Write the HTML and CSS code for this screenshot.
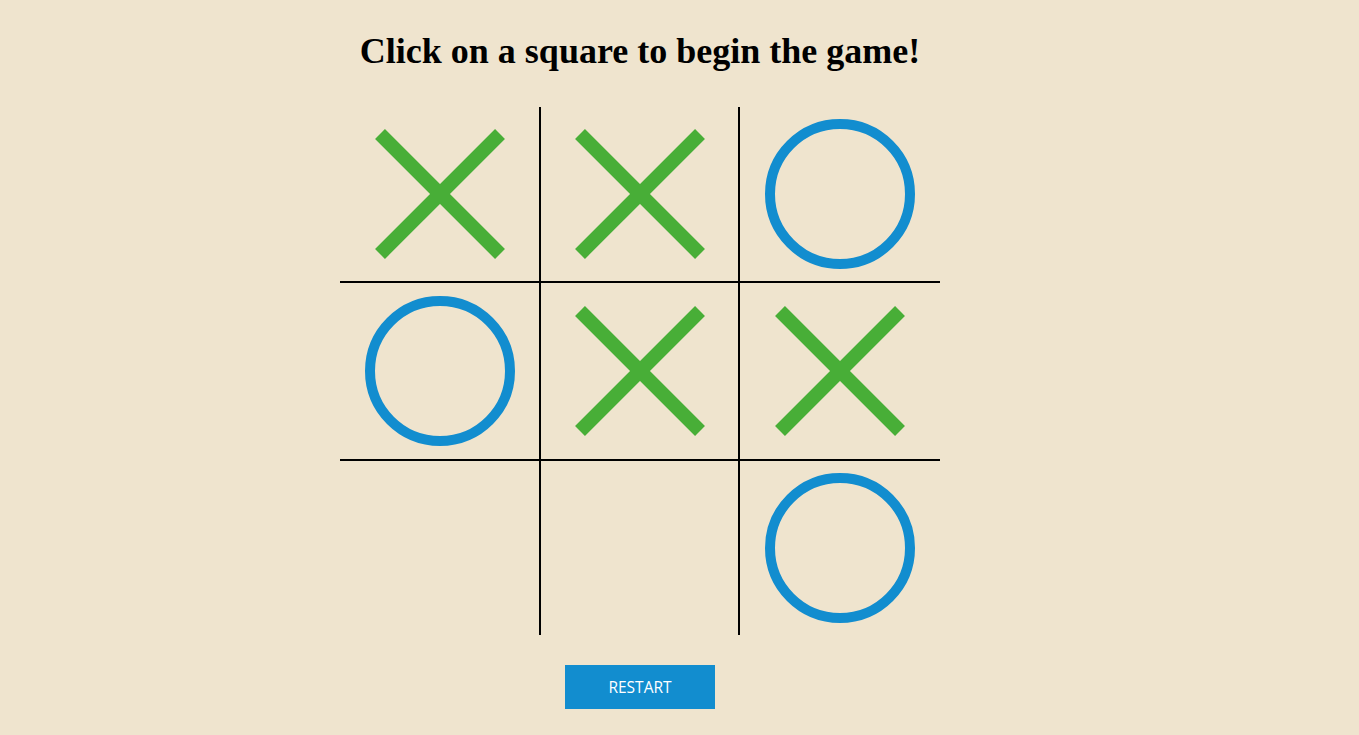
FILE: index.html
```html
<!DOCTYPE html>
<html lang="en">
<head>
<meta charset="utf-8">
<title>Tic Tac Toe</title>
<link rel="stylesheet" href="styles.css">
</head>
<body>
<div class="game">
  <h1 class="status">Click on a square to begin the game!</h1>
  <div class="board">
    <div class="cell c1 r1"><svg class="mark" width="132" height="132" viewBox="0 0 132 132"><line x1="6" y1="6" x2="126" y2="126"/><line x1="126" y1="6" x2="6" y2="126"/></svg></div>
    <div class="cell c2 r1"><svg class="mark" width="132" height="132" viewBox="0 0 132 132"><line x1="6" y1="6" x2="126" y2="126"/><line x1="126" y1="6" x2="6" y2="126"/></svg></div>
    <div class="cell c3 r1"><svg class="ring" width="150" height="150" viewBox="0 0 150 150"><circle cx="75" cy="75" r="70"/></svg></div>
    <div class="cell c1 r2"><svg class="ring" width="150" height="150" viewBox="0 0 150 150"><circle cx="75" cy="75" r="70"/></svg></div>
    <div class="cell c2 r2"><svg class="mark" width="132" height="132" viewBox="0 0 132 132"><line x1="6" y1="6" x2="126" y2="126"/><line x1="126" y1="6" x2="6" y2="126"/></svg></div>
    <div class="cell c3 r2"><svg class="mark" width="132" height="132" viewBox="0 0 132 132"><line x1="6" y1="6" x2="126" y2="126"/><line x1="126" y1="6" x2="6" y2="126"/></svg></div>
    <div class="cell c1 r3"></div>
    <div class="cell c2 r3"></div>
    <div class="cell c3 r3"><svg class="ring" width="150" height="150" viewBox="0 0 150 150"><circle cx="75" cy="75" r="70"/></svg></div>
  </div>
  <div class="actions">
    <button class="restart" type="button">RESTART</button>
  </div>
</div>
</body>
</html>
```

FILE: styles.css
```css
html, body {
  margin: 0;
  padding: 0;
  background: #efe4ce;
}

body {
  height: 735px;
  overflow: hidden;
}

.game {
  width: 600px;
  margin-left: 340px;
  padding-top: 30px;
}

.status {
  margin: 0 0 35px;
  font-family: "Liberation Serif", "Times New Roman", serif;
  font-weight: bold;
  font-size: 36px;
  line-height: 42px;
  text-align: center;
  color: #000;
}

.board {
  display: grid;
  grid-template-columns: 201px 199px 200px;
  grid-template-rows: 176px 178px 174px;
}

.cell {
  display: flex;
  align-items: center;
  justify-content: center;
  box-sizing: border-box;
}

.c1, .c2 {
  border-right: 2px solid #000;
}

.r1, .r2 {
  border-bottom: 2px solid #000;
}

.mark line {
  stroke: #48ae37;
  stroke-width: 14;
  stroke-linecap: butt;
}

.ring circle {
  fill: none;
  stroke: #128dcf;
  stroke-width: 10;
}

.actions {
  display: flex;
  justify-content: center;
  padding-top: 30px;
}

.restart {
  width: 150px;
  height: 44px;
  border: none;
  background: #128dcf;
  color: #fff;
  font-family: "Open Sans", "Noto Sans", sans-serif;
  font-size: 15.5px;
  padding: 0;
  cursor: pointer;
}
```
